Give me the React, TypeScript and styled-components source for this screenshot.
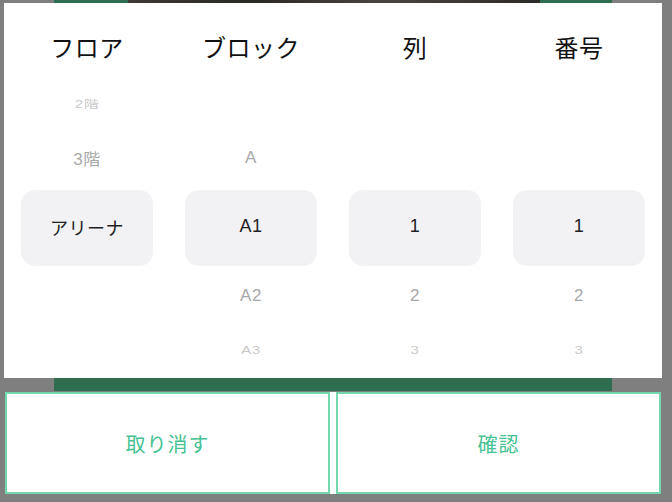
import styled, { createGlobalStyle } from "styled-components";

const GlobalStyle = createGlobalStyle`
  html, body {
    margin: 0;
    padding: 0;
    background: #7f7f7f;
  }
  body {
    font-family: "Liberation Sans", "Noto Sans CJK JP", sans-serif;
  }
`;

const Screen = styled.div`
  width: 672px;
  height: 502px;
  background: #7f7f7f;
  display: flex;
  flex-direction: column;
  overflow: hidden;
`;

const TopStrip = styled.div`
  height: 3px;
  margin-left: 54px;
  width: 558px;
  background: linear-gradient(
    to right,
    #2f6d50 0,
    #2f6d50 74px,
    #3b3835 74px,
    #2b2926 200px,
    #4a4541 330px,
    #2c2a28 486px,
    #2f6d50 486px,
    #2f6d50 100%
  );
`;

const Panel = styled.div`
  margin-left: 4px;
  width: 658px;
  height: 375px;
  background: #fff;
  box-sizing: border-box;
  padding: 0 1px;
  display: grid;
  grid-template-columns: repeat(4, 164px);
`;

const Column = styled.div`
  display: flex;
  flex-direction: column;
  align-items: stretch;
`;

const Header = styled.div`
  height: 77px;
  box-sizing: border-box;
  padding-top: 32px;
  font-family: "Noto Sans CJK JP", sans-serif;
  font-size: 24px;
  line-height: 24px;
  color: #111;
  text-align: center;
  letter-spacing: 0.5px;
`;

type Level = "far" | "near";

const slotHeights: Record<string, number> = {
  farTop: 46,
  nearTop: 64,
  nearBottom: 60,
  farBottom: 48,
};

const Slot = styled.div<{ $h: number; $level: Level }>`
  height: ${(p) => p.$h}px;
  display: flex;
  align-items: center;
  justify-content: center;
  font-size: ${(p) => (p.$level === "far" ? 15 : 17)}px;
  color: ${(p) => (p.$level === "far" ? "#cacaca" : "#a8a8a8")};
  letter-spacing: 0.5px;

  span {
    display: inline-block;
    transform: scaleY(${(p) => (p.$level === "far" ? 0.7 : 0.93)});
  }
`;

const Selected = styled.div`
  height: 76px;
  margin: 0 16px;
  box-sizing: border-box;
  padding-bottom: 3px;
  border-radius: 14px;
  background: #f2f2f4;
  display: flex;
  align-items: center;
  justify-content: center;
  font-size: 18px;
  color: #1f1f1f;
  letter-spacing: 0.5px;
`;

const BottomStrip = styled.div`
  height: 13px;
  margin-left: 54px;
  width: 558px;
  background: #2f6d50;
`;

const ButtonRow = styled.div`
  margin-top: 1px;
  margin-left: 5px;
  width: 656px;
  height: 102px;
  background: #fff;
  display: grid;
  grid-template-columns: 1fr 1fr;
  gap: 6px;
`;

const ActionButton = styled.button`
  border: 2px solid #74d8ae;
  background: #fff;
  margin: 0;
  padding: 0;
  font-family: "Noto Sans CJK JP", sans-serif;
  font-size: 20px;
  color: #45c293;
  letter-spacing: 1px;
  cursor: pointer;
`;

interface PickerData {
  title: string;
  farTop?: string;
  nearTop?: string;
  selected: string;
  nearBottom?: string;
  farBottom?: string;
}

const pickers: PickerData[] = [
  { title: "フロア", farTop: "2階", nearTop: "3階", selected: "アリーナ" },
  { title: "ブロック", nearTop: "A", selected: "A1", nearBottom: "A2", farBottom: "A3" },
  { title: "列", selected: "1", nearBottom: "2", farBottom: "3" },
  { title: "番号", selected: "1", nearBottom: "2", farBottom: "3" },
];

function Picker({ data }: { data: PickerData }) {
  return (
    <Column>
      <Header>{data.title}</Header>
      <Slot $h={slotHeights.farTop} $level="far">
        <span>{data.farTop}</span>
      </Slot>
      <Slot $h={slotHeights.nearTop} $level="near">
        <span>{data.nearTop}</span>
      </Slot>
      <Selected>{data.selected}</Selected>
      <Slot $h={slotHeights.nearBottom} $level="near">
        <span>{data.nearBottom}</span>
      </Slot>
      <Slot $h={slotHeights.farBottom} $level="far">
        <span>{data.farBottom}</span>
      </Slot>
    </Column>
  );
}

export default function App() {
  return (
    <Screen>
      <GlobalStyle />
      <TopStrip />
      <Panel>
        {pickers.map((p) => (
          <Picker key={p.title} data={p} />
        ))}
      </Panel>
      <BottomStrip />
      <ButtonRow>
        <ActionButton>取り消す</ActionButton>
        <ActionButton>確認</ActionButton>
      </ButtonRow>
    </Screen>
  );
}
